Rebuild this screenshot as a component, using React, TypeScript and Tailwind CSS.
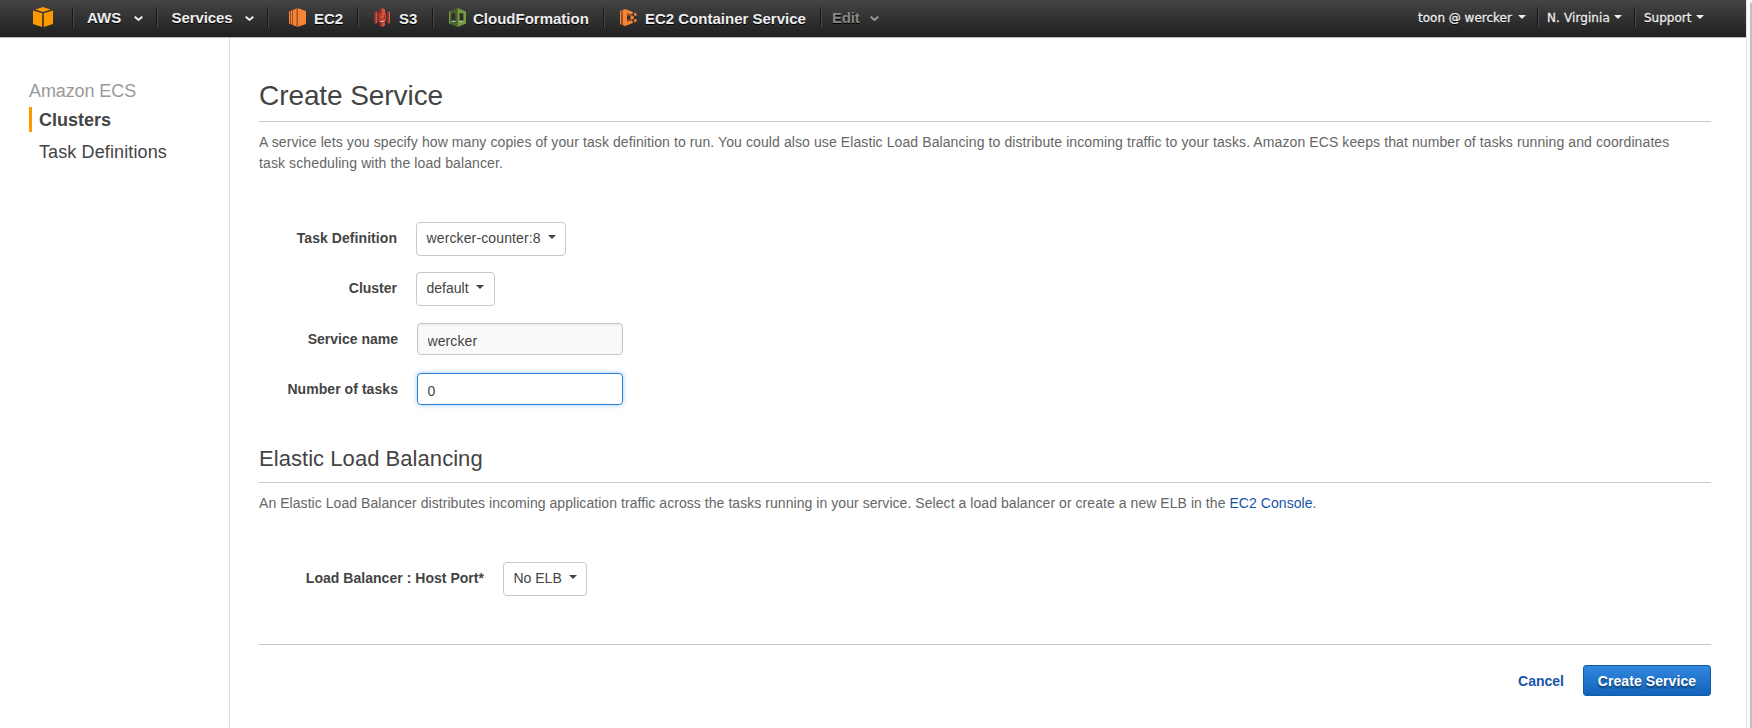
import { ReactNode } from "react";

function LogoIcon() {
  return (
    <svg width="20" height="20" viewBox="0 0 20 20" fill="#ff9900" className="block">
      <path d="M10 0 17.6 2.6 10 5.1 2.3 2.6Z" />
      <path d="M0 3.4 9.2 6.3V20L0 17.1Z" />
      <path d="M20 3.4 10.8 6.3V20L20 17.1Z" />
    </svg>
  );
}

function Ec2Icon() {
  return (
    <svg width="17" height="19" viewBox="0 0 17 19" className="block">
      <path d="M8.5 0 17 3V16L8.5 19Z" fill="#f58534" />
      <path d="M0 3.6 8.5 0V19L0 15.4Z" fill="#9d5025" />
      <path d="M0 3.6 1 3.3V15.7L0 15.4ZM2 2.8 3 2.4V16.6L2 16.2ZM4 2 7.5.5V18.5L4 17Z" fill="#f58534" />
    </svg>
  );
}

function S3Icon() {
  return (
    <svg width="16" height="19" viewBox="0 0 16 19" className="block">
      <path d="M0 4 1.6 3.2V15.8L0 15Z" fill="#8c3123" />
      <path d="M1.6 3.2 3.2 4v11l-1.6.8Z" fill="#e05243" />
      <path d="M16 4 14.4 3.2V15.8L16 15Z" fill="#e05243" />
      <path d="M14.4 3.2 13 4v11l1.4.8Z" fill="#8c3123" />
      <path d="M8 0 5 1.6V5.4L8 4.8Z" fill="#8c3123" />
      <path d="M8 0 11 1.6V5.4L8 4.8Z" fill="#e05243" />
      <path d="M4.2 5.2 8 4.6V13.6L4.2 13.2Z" fill="#b8392b" />
      <path d="M8 4.6 11.8 5.2v8L8 13.6Z" fill="#e05243" />
      <path d="M5.4 7.2H10.8v4.2H5.4z" fill="#8c3123" />
      <path d="M6.4 7.2H9.8v3.4H6.4z" fill="#e05243" />
      <path d="M5 13.2 8 12.8 11 13.2 8 14.4Z" fill="#f2a79f" />
      <path d="M5 14 8 14.8V19L5 17.4Z" fill="#8c3123" />
      <path d="M11 14 8 14.8V19L11 17.4Z" fill="#e05243" />
    </svg>
  );
}

function CloudFormationIcon() {
  return (
    <svg width="17" height="19" viewBox="0 0 17 19" className="block">
      <path d="M8.5 0V19L0 15.4V3.6Z" fill="#4c622c" />
      <path d="M8.5 0V19L17 15.4V3.6Z" fill="#759c3e" />
      <path d="M0 3.6 1.2 3.2V15.9L0 15.4Z" fill="#759c3e" />
      <path d="M2.4 5.6 6.2 5V13.6H2.4Z" fill="#2e2e2e" />
      <path d="M10.6 5 14.4 5.6v8H10.6Z" fill="#2e2e2e" />
      <path d="M2.4 12.8H6.2V14L2.4 13.6ZM10.6 12.8h3.8v.8l-3.8.4Z" fill="#dfe8d0" />
    </svg>
  );
}

function EcsIcon() {
  return (
    <svg width="17" height="17" viewBox="0 0 17 17" className="block">
      <path d="M0 2 1.4 1.3V15.7L0 15Z" fill="#f58534" />
      <path d="M1.4 1.3 2.3 1V16l-.9-.3Z" fill="#9d5025" />
      <path d="M2.6.9 5 0v17L2.6 16Z" fill="#f58534" />
      <path d="M5 0 13 3.1 12.2 5.4 7 4.4v8.2l5.2-1 .8 2.3L5 17Z" fill="#f58534" />
      <path d="M7 4.4 12.2 5.4v6.2L7 12.6Z" fill="#9d5025" />
      <path d="M7 6.6 10 7.2v3.2l-3 .6Z" fill="#303030" />
      <path d="M11 6.9h2.6v3.4H11z" fill="#f58534" />
      <path d="M14 3.8 16.6 4.6V7L14 6.6ZM14 10.4l2.6-.4v2.4L14 13.4Z" fill="#f58534" />
    </svg>
  );
}

function Chevron({ className = "" }: { className?: string }) {
  return (
    <svg width="9" height="5" viewBox="0 0 9 5" fill="none" stroke="currentColor" strokeWidth="2" className={`block shrink-0 ${className}`}>
      <path d="M.7.7 4.5 3.9 8.3.7" />
    </svg>
  );
}

function Caret({ className = "" }: { className?: string }) {
  return (
    <svg width="8" height="4" viewBox="0 0 8 4" fill="currentColor" className={`block shrink-0 ${className}`}>
      <path d="M0 0H8L4 4Z" />
    </svg>
  );
}

function Separator() {
  return <span className="h-5 w-[2px] shrink-0 border-l border-r border-l-[#171717] border-r-[#4b4b4b]" />;
}

function NavCell({ width, children }: { width: string; children: ReactNode }) {
  return <div className={`flex h-5 shrink-0 items-center ${width}`}>{children}</div>;
}

function Select({ children, width, tracking = "" }: { children: string; width: string; tracking?: string }) {
  return (
    <button
      className={`flex h-[34px] items-start rounded border border-[#c8c8c8] bg-white pt-[5px] pl-[9.5px] text-[14px] leading-[21px] text-[#444] ${width}`}
    >
      <span className={tracking}>{children}</span>
      <Caret className="mt-[7px] ml-[7px]" />
    </button>
  );
}

function Header() {
  return (
    <header className="flex h-[38px] shrink-0 items-start border-b border-[#bbb] bg-linear-to-b from-[#444] to-[#202020] pt-[7px] pl-[33px] text-[15px] leading-5 font-bold text-[#eee] [text-shadow:0_1px_0_#000]">
      <NavCell width="w-[39px]">
        <LogoIcon />
      </NavCell>
      <Separator />
      <NavCell width="w-[82px]">
        <span className="mt-px ml-[13px] w-[36px]">AWS</span>
        <Chevron className="mt-[2px] ml-[11px]" />
      </NavCell>
      <Separator />
      <NavCell width="w-[109px]">
        <span className="mt-px ml-[13.5px] w-[62.5px] tracking-[-0.1px]">Services</span>
        <Chevron className="mt-[2px] ml-[11px]" />
      </NavCell>
      <Separator />
      <NavCell width="w-[88px]">
        <span className="mt-px ml-5"><Ec2Icon /></span>
        <span className="mt-[3px] ml-[8px]">EC2</span>
      </NavCell>
      <Separator />
      <NavCell width="w-[73px]">
        <span className="mt-px ml-[15px]"><S3Icon /></span>
        <span className="mt-[3px] ml-[9px]">S3</span>
      </NavCell>
      <Separator />
      <NavCell width="w-[169px]">
        <span className="mt-px ml-[15px]"><CloudFormationIcon /></span>
        <span className="mt-[3px] ml-[7px]">CloudFormation</span>
      </NavCell>
      <Separator />
      <NavCell width="w-[215px]">
        <span className="mt-px ml-[15px]"><EcsIcon /></span>
        <span className="mt-[3px] ml-[8px] whitespace-nowrap">EC2 Container Service</span>
      </NavCell>
      <Separator />
      <NavCell width="w-[80px]">
        <span className="mt-px ml-[10px] w-[27px] text-[#888] tracking-[-0.2px]">Edit</span>
        <Chevron className="mt-[2px] ml-[11px] text-[#999]" />
      </NavCell>
      <div className="ml-auto flex items-start font-['DejaVu_Sans',sans-serif] text-[12px] font-normal text-[#eee] [-webkit-text-stroke:0.3px_#eee]">
        <NavCell width="w-[119px]">
          <span className="mt-[2px] w-[95px] whitespace-nowrap">toon @ wercker</span>
          <Caret className="ml-[5px]" />
        </NavCell>
        <Separator />
        <NavCell width="w-[95px]">
          <span className="mt-[2px] ml-2 w-[63px] tracking-[0.1px] whitespace-nowrap">N. Virginia</span>
          <Caret className="ml-[4px]" />
        </NavCell>
        <Separator />
        <NavCell width="w-[110px]">
          <span className="mt-[2px] ml-2 w-[48px]">Support</span>
          <Caret className="ml-[4px]" />
        </NavCell>
      </div>
    </header>
  );
}

function Sidebar() {
  return (
    <nav className="w-[230px] shrink-0 border-r border-[#ddd] pt-[41px] pl-[29px] text-[18px] text-[#444]">
      <div className="h-7 leading-6 tracking-[-0.1px] text-[#999]">Amazon ECS</div>
      <div className="h-[25px] border-l-[3px] border-[#ff9900] pl-[7px] leading-[26px] font-bold">Clusters</div>
      <div className="mt-[7px] pl-[10px] leading-[26px] tracking-[0.12px]">Task Definitions</div>
    </nav>
  );
}

function Row({ label, height, labelWidth, children }: { label: string; height: string; labelWidth: string; children: ReactNode }) {
  return (
    <div className={`flex items-start text-[14px] ${height}`}>
      <label className={`pt-[6px] text-right leading-[21px] font-bold whitespace-nowrap text-[#444] ${labelWidth}`}>{label}</label>
      {children}
    </div>
  );
}

export default function App() {
  return (
    <div className="flex h-[728px] w-full overflow-hidden bg-white font-['Liberation_Sans',Arial,sans-serif] text-[#444]">
      <div className="flex min-w-0 flex-1 flex-col">
        <Header />
        <div className="flex min-h-0 flex-1">
          <Sidebar />
          <main className="flex min-w-0 flex-1 flex-col pr-[35px] pl-[29px]">
            <h1 className="mt-[38px] h-[46px] border-b border-[#c8c8c8] text-[28px] leading-[40px] tracking-[-0.08px]">Create Service</h1>
            <p className="mt-[10px] h-[42px] text-[14px] leading-[21px] text-[#666]">
              <span className="block tracking-[0.096px] whitespace-nowrap">
                A service lets you specify how many copies of your task definition to run. You could also use Elastic Load Balancing to distribute incoming traffic to your tasks. Amazon ECS keeps that number of tasks running and coordinates
              </span>
              <span className="block tracking-[0.11px] whitespace-nowrap">task scheduling with the load balancer.</span>
            </p>
            <div className="mt-12">
              <Row label="Task Definition" height="h-[50px]" labelWidth="w-[138px] mr-[19px] tracking-[0.06px]">
                <Select width="w-[150px]" tracking="tracking-[0.13px]">wercker-counter:8</Select>
              </Row>
              <Row label="Cluster" height="h-[51px]" labelWidth="w-[138px] mr-[19px]">
                <Select width="w-[79px]">default</Select>
              </Row>
              <Row label="Service name" height="h-[50px]" labelWidth="w-[139px] mr-[19px]">
                <input
                  defaultValue="wercker"
                  className="h-8 w-[206px] rounded border border-[#c8c8c8] bg-[#fafafa] px-[9.5px] pt-1 tracking-[0.1px] shadow-[inset_0_1px_2px_rgba(0,0,0,0.08)] outline-none"
                />
              </Row>
              <Row label="Number of tasks" height="h-[50px]" labelWidth="w-[139px] mr-[19px] tracking-[0.06px]">
                <input
                  defaultValue="0"
                  className="h-8 w-[206px] rounded border border-[#2e81d6] bg-white px-[9.5px] pt-1 shadow-[0_0_5px_rgba(74,156,235,0.55)] outline-none"
                />
              </Row>
            </div>
            <h2 className="mt-[22px] h-[38px] border-b border-[#c8c8c8] text-[22px] leading-[28px] tracking-[0.05px]">Elastic Load Balancing</h2>
            <p className="mt-[10px] text-[14px] leading-[21px] tracking-[0.056px] text-[#666]">
              An Elastic Load Balancer distributes incoming application traffic across the tasks running in your service. Select a load balancer or create a new ELB in the{" "}
              <a href="#" className="text-[#1754a8]">EC2 Console</a>.
            </p>
            <div className="mt-12">
              <Row label="Load Balancer : Host Port*" height="h-[34px]" labelWidth="w-[225px] mr-[19px] tracking-[0.03px]">
                <Select width="w-[84px]">No ELB</Select>
              </Row>
            </div>
            <div className="mt-12 flex items-start justify-end border-t border-[#c8c8c8] pt-5 text-[14px] font-bold">
              <a href="#" className="mr-[19px] leading-[32px] text-[#1754a8]">Cancel</a>
              <button className="h-[31px] w-[128px] rounded-[3px] border border-[#0f5cab] bg-linear-to-b from-[#3287de] to-[#1163bb] leading-[30px] tracking-[0.08px] whitespace-nowrap text-white [text-shadow:0_2px_2px_rgba(0,0,0,0.45)]">
                Create Service
              </button>
            </div>
          </main>
        </div>
      </div>
      <div className="flex w-[6px] shrink-0 justify-end border-l border-[#e4e4e4] bg-[#fafafa] pt-[2px]">
        <div className="w-[2px] rounded-tl-full bg-[#c1c1c1]" />
      </div>
    </div>
  );
}
